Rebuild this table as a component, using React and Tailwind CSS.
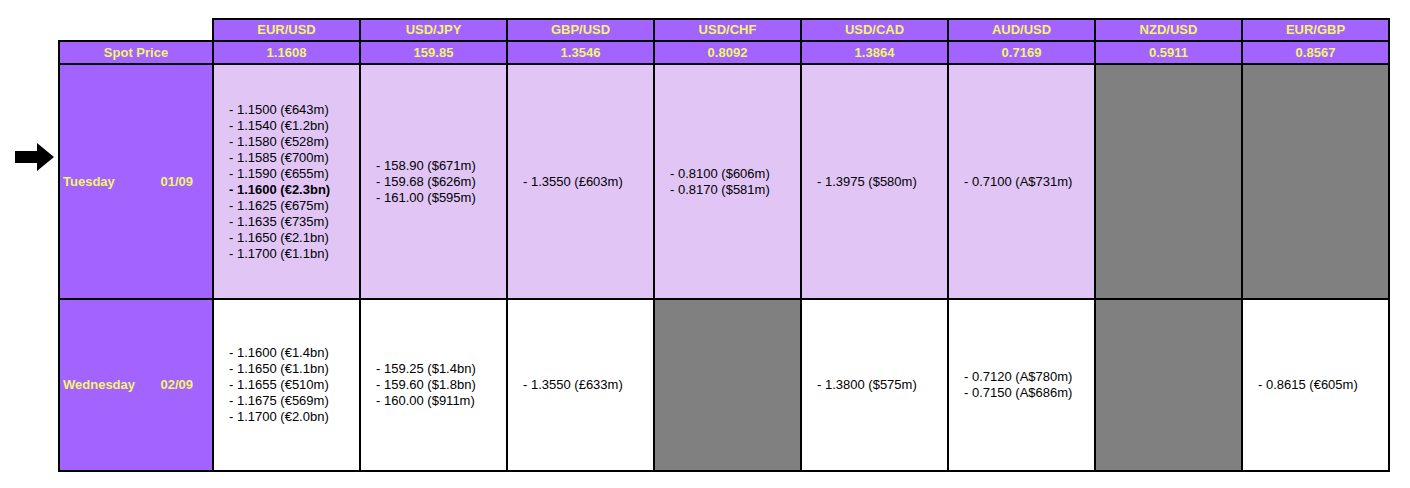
import React from "react";

const pairs = [
  { name: "EUR/USD", spot: "1.1608" },
  { name: "USD/JPY", spot: "159.85" },
  { name: "GBP/USD", spot: "1.3546" },
  { name: "USD/CHF", spot: "0.8092" },
  { name: "USD/CAD", spot: "1.3864" },
  { name: "AUD/USD", spot: "0.7169" },
  { name: "NZD/USD", spot: "0.5911" },
  { name: "EUR/GBP", spot: "0.8567" },
];

// null = no expiries (grey cell)
const rows = [
  {
    day: "Tuesday",
    date: "01/09",
    bg: "bg-[#e0c5f5]",
    height: "h-[235px]",
    cells: [
      [
        "1.1500 (€643m)",
        "1.1540 (€1.2bn)",
        "1.1580 (€528m)",
        "1.1585 (€700m)",
        "1.1590 (€655m)",
        { text: "1.1600 (€2.3bn)", bold: true },
        "1.1625 (€675m)",
        "1.1635 (€735m)",
        "1.1650 (€2.1bn)",
        "1.1700 (€1.1bn)",
      ],
      ["158.90 ($671m)", "159.68 ($626m)", "161.00 ($595m)"],
      ["1.3550 (£603m)"],
      ["0.8100 ($606m)", "0.8170 ($581m)"],
      ["1.3975 ($580m)"],
      ["0.7100 (A$731m)"],
      null,
      null,
    ],
  },
  {
    day: "Wednesday",
    date: "02/09",
    bg: "bg-white",
    height: "h-[172px]",
    cells: [
      [
        "1.1600 (€1.4bn)",
        "1.1650 (€1.1bn)",
        "1.1655 (€510m)",
        "1.1675 (€569m)",
        "1.1700 (€2.0bn)",
      ],
      ["159.25 ($1.4bn)", "159.60 ($1.8bn)", "160.00 ($911m)"],
      ["1.3550 (£633m)"],
      null,
      ["1.3800 ($575m)"],
      ["0.7120 (A$780m)", "0.7150 (A$686m)"],
      null,
      ["0.8615 (€605m)"],
    ],
  },
];

function ArrowIcon() {
  return (
    <svg width="39" height="28" viewBox="0 0 39 28">
      <path d="M0 8 H22 V0 L39 14 L22 28 V20 H0 Z" fill="#000" />
    </svg>
  );
}

export default function App() {
  return (
    <div className="flex bg-white min-h-[488px] pt-[18px] font-['Liberation_Sans',Arial,sans-serif]">
      <div className="w-[58px] shrink-0 pl-[15px] pt-[125px]">
        <ArrowIcon />
      </div>
      <table className="table-fixed border-collapse w-[1332px] h-fit text-[13px] leading-[16px]">
        <colgroup>
          <col className="w-[154px]" />
          {pairs.map((p) => (
            <col key={p.name} className="w-[147px]" />
          ))}
        </colgroup>
        <thead>
          <tr className="h-[22px]">
            <th className="p-0" />
            {pairs.map((p) => (
              <th
                key={p.name}
                className="border-2 border-black bg-[#a263ff] text-[#f5f56a] font-bold text-center p-0"
              >
                {p.name}
              </th>
            ))}
          </tr>
          <tr className="h-[23px]">
            <th className="border-2 border-black bg-[#a263ff] text-[#f5f56a] font-bold text-center p-0">
              Spot Price
            </th>
            {pairs.map((p) => (
              <th
                key={p.name}
                className="border-2 border-black bg-[#a263ff] text-[#f5f56a] font-bold text-center p-0"
              >
                {p.spot}
              </th>
            ))}
          </tr>
        </thead>
        <tbody>
          {rows.map((r) => (
            <tr key={r.day} className={r.height}>
              <td className="border-2 border-black bg-[#a263ff] text-[#f5f56a] font-bold px-[3px]">
                <div className="flex justify-between pr-[16px]">
                  <span>{r.day}</span>
                  <span>{r.date}</span>
                </div>
              </td>
              {r.cells.map((c, i) =>
                c === null ? (
                  <td key={i} className="border-2 border-black bg-[#808080]" />
                ) : (
                  <td
                    key={i}
                    className={`border-2 border-black ${r.bg} pl-[15px] text-black align-middle`}
                  >
                    {c.map((line, j) =>
                      typeof line === "string" ? (
                        <div key={j}>- {line}</div>
                      ) : (
                        <div key={j} className="font-bold">
                          - {line.text}
                        </div>
                      )
                    )}
                  </td>
                )
              )}
            </tr>
          ))}
        </tbody>
      </table>
    </div>
  );
}
